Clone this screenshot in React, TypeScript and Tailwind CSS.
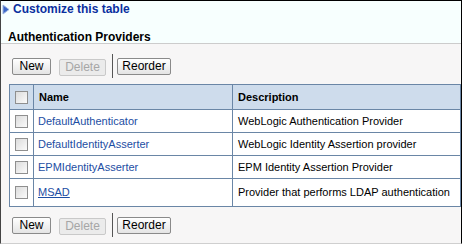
import React from "react";

const rows = [
  { name: "DefaultAuthenticator", desc: "WebLogic Authentication Provider" },
  { name: "DefaultIdentityAsserter", desc: "WebLogic Identity Assertion provider" },
  { name: "EPMIdentityAsserter", desc: "EPM Identity Assertion Provider" },
  { name: "MSAD", desc: "Provider that performs LDAP authentication", underline: true },
];

function Checkbox() {
  return (
    <span className="block h-[13px] w-[13px] border border-[#8f8f8f] bg-gradient-to-br from-[#dcdcdc] to-[#fbfbfb]" />
  );
}

function Btn({ label, width, disabled }: { label: string; width: string; disabled?: boolean }) {
  return (
    <button
      className={
        (disabled
          ? "h-[17px] rounded-[2px] border border-[#c9c9c9] bg-[#ebebeb] p-0 text-[12px] leading-none text-[#a6a6a6] "
          : "h-[17px] rounded-[2px] border border-[#8a8a8a] bg-gradient-to-b from-[#ffffff] to-[#e4e4e4] p-0 text-[12px] leading-none text-black ") +
        width
      }
    >
      {label}
    </button>
  );
}

function Toolbar() {
  return (
    <div className="flex h-[24px] items-center pl-[11px]">
      <Btn label="New" width="w-[39px]" />
      <div className="ml-[8px]">
        <Btn label="Delete" width="w-[47px]" disabled />
      </div>
      <div className="ml-[6px] mr-[4px] h-[24px] w-px bg-[#555]" />
      <Btn label="Reorder" width="w-[54px]" />
    </div>
  );
}

export default function App() {
  return (
    <div className="h-[246px] w-[463px] bg-white" style={{ fontFamily: '"Liberation Sans", Arial, sans-serif' }}>
      <div className="flex h-[244px] w-[462px] flex-col border-l border-r border-t border-b border-l-[#444] border-r-black border-t-black border-b-[#cfcfcf]">
        <div className="h-[43px] border-b border-[#cccccc] bg-[#f7fffe]">
          <div className="flex items-center gap-[3px] pl-[1px] pt-[1px]">
            <svg width="8" height="11" viewBox="0 0 8 11">
              <path d="M1 1 L7 5.5 L1 10 Z" fill="#3a66c8" stroke="#9bb2de" strokeWidth="1" />
            </svg>
            <span className="text-[12px] font-bold leading-[14px] text-[#0a2f9e]">Customize this table</span>
          </div>
          <div className="pl-[7px] pt-[14px] text-[12px] font-bold leading-[14px] text-black">Authentication Providers</div>
        </div>
        <div className="flex-1 bg-[#f7f6f6]">
          <div className="pt-[10px]">
            <Toolbar />
          </div>
          <table className="ml-[8px] mt-[6px] w-[452px] border-collapse text-[11px]">
            <thead>
              <tr className="h-[25px] bg-[#cedcec]">
                <th className="w-[24px] border border-[#6a86a6] p-0">
                  <div className="flex justify-center">
                    <Checkbox />
                  </div>
                </th>
                <th className="w-[199px] border border-[#6a86a6] pl-[5px] text-left font-bold">Name</th>
                <th className="border border-[#6a86a6] pl-[5px] text-left font-bold">Description</th>
              </tr>
            </thead>
            <tbody>
              {rows.map((r, i) => (
                <tr key={r.name} className={i === rows.length - 1 ? "h-[28px] bg-white" : "h-[23px] bg-white"}>
                  <td className="border border-[#6a86a6] p-0">
                    <div className="flex justify-center">
                      <Checkbox />
                    </div>
                  </td>
                  <td className="border border-[#6a86a6] pl-[4px]">
                    <span className={r.underline ? "text-[#1d4ea3] underline" : "text-[#1d4ea3]"}>{r.name}</span>
                  </td>
                  <td className="border border-[#6a86a6] pl-[5px] text-black">{r.desc}</td>
                </tr>
              ))}
            </tbody>
          </table>
          <div className="pt-[6px]">
            <Toolbar />
          </div>
        </div>
      </div>
    </div>
  );
}
